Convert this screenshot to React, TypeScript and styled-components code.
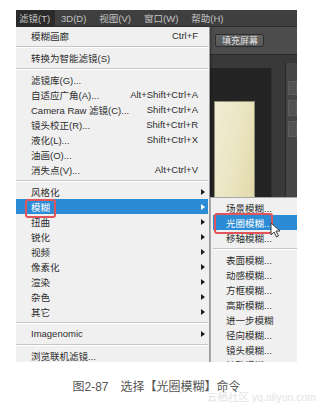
import React from 'react'
import styled, { createGlobalStyle } from 'styled-components'

const UI_FONT = `"Liberation Sans", "Noto Sans CJK SC", sans-serif`
const HILITE = '#2b8bd5'

type Entry =
  | { kind: 'item'; label: string; shortcut?: string; sub?: boolean; active?: boolean; marked?: boolean }
  | { kind: 'sep' }

const item = (label: string, extra: Partial<Omit<Entry & { kind: 'item' }, 'kind' | 'label'>> = {}): Entry => ({
  kind: 'item',
  label,
  ...extra,
})
const sep: Entry = { kind: 'sep' }

const FILTER_MENU: Entry[] = [
  item('模糊画廊', { shortcut: 'Ctrl+F' }),
  sep,
  item('转换为智能滤镜(S)'),
  sep,
  item('滤镜库(G)...'),
  item('自适应广角(A)...', { shortcut: 'Alt+Shift+Ctrl+A' }),
  item('Camera Raw 滤镜(C)...', { shortcut: 'Shift+Ctrl+A' }),
  item('镜头校正(R)...', { shortcut: 'Shift+Ctrl+R' }),
  item('液化(L)...', { shortcut: 'Shift+Ctrl+X' }),
  item('油画(O)...'),
  item('消失点(V)...', { shortcut: 'Alt+Ctrl+V' }),
  sep,
  item('风格化', { sub: true }),
  item('模糊', { sub: true, active: true, marked: true }),
  item('扭曲', { sub: true }),
  item('锐化', { sub: true }),
  item('视频', { sub: true }),
  item('像素化', { sub: true }),
  item('渲染', { sub: true }),
  item('杂色', { sub: true }),
  item('其它', { sub: true }),
  sep,
  item('Imagenomic', { sub: true }),
  sep,
  item('浏览联机滤镜...'),
]

const BLUR_MENU: Entry[] = [
  item('场景模糊...'),
  item('光圈模糊...', { active: true, marked: true }),
  item('移轴模糊...'),
  sep,
  item('表面模糊...'),
  item('动感模糊...'),
  item('方框模糊...'),
  item('高斯模糊...'),
  item('进一步模糊'),
  item('径向模糊...'),
  item('镜头模糊...'),
  item('特殊模糊...'),
]

const MENU_BAR = ['滤镜(T)', '3D(D)', '视图(V)', '窗口(W)', '帮助(H)']

const GlobalStyle = createGlobalStyle`
  html, body {
    margin: 0;
    padding: 0;
    background: #ffffff;
  }
  body {
    font-family: ${UI_FONT};
  }
`

const Page = styled.div`
  position: relative;
  width: 323px;
  height: 411px;
  padding: 10px 0 0 16px;
  box-sizing: border-box;
  overflow: hidden;
`

const Shot = styled.div`
  position: relative;
  width: 281px;
  height: 352px;
  overflow: hidden;
  display: flex;
  flex-direction: column;
  background: #262626;
`

const MenuBar = styled.div`
  height: 17px;
  display: flex;
  align-items: stretch;
  gap: 13px;
  background: #3f3f3f;
  border-bottom: 1px solid #2c2c2c;
  box-sizing: border-box;
`

const MenuBarItem = styled.div<{ $open?: boolean }>`
  display: flex;
  align-items: center;
  padding: ${(p) => (p.$open ? '0 4px 0 3px' : '0')};
  margin-right: ${(p) => (p.$open ? '-7px' : '0')};
  width: ${(p) => (p.$open ? '39px' : 'auto')};
  box-sizing: border-box;
  background: ${(p) => (p.$open ? '#2a2a2a' : 'transparent')};
  color: #c4c4c4;
  font-size: 9.5px;
  white-space: nowrap;
`

const OptionsBar = styled.div`
  height: 28px;
  display: flex;
  align-items: center;
  padding-left: 199px;
  background: #4c4c4c;
  border-bottom: 1px solid #2b2b2b;
  box-sizing: border-box;
`

const FillButton = styled.div`
  width: 49px;
  height: 13px;
  display: flex;
  align-items: center;
  padding-left: 6px;
  box-sizing: border-box;
  background: linear-gradient(#646464, #575757);
  border: 1px solid #2f2f2f;
  border-radius: 2px;
  color: #e2e2e2;
  font-size: 9px;
`

const TabStrip = styled.div`
  height: 13px;
  background: #393939;
`

const Workspace = styled.div`
  flex: 1;
  display: flex;
`

const DocArea = styled.div`
  flex: 1;
  padding: 33px 0 0 198px;
  background: #242424;
`

const DocImage = styled.div`
  width: 41px;
  height: 160px;
  border: 1px solid #8f8b73;
  box-sizing: border-box;
  background: linear-gradient(100deg, #f1edd3 0%, #ebe5c2 45%, #ddd49f 100%);
`

const ScrollColumn = styled.div`
  width: 13px;
  background: #393939;
  border-left: 1px solid #2f2f2f;
`

const SidePanel = styled.div`
  width: 9px;
  margin-top: -5px;
  padding: 18px 0 0 2px;
  display: flex;
  flex-direction: column;
  gap: 5px;
  background: #464646;
  border-left: 1px solid #2a2a2a;
`

const PanelBox = styled.div<{ $h: number }>`
  height: ${(p) => p.$h}px;
  background: #525252;
  border: 1px solid #5e5e5e;
`

const DropMenu = styled.div`
  position: absolute;
  top: 17px;
  left: 0;
  width: 194px;
  padding-top: 1px;
  background: #f0f0f0;
  border-right: 1px solid #9c9c9c;
  box-sizing: border-box;
  box-shadow: 1px 1px 2px rgba(0, 0, 0, 0.35);
  font-size: 9.5px;
`

const SubMenu = styled.div`
  position: absolute;
  top: 187px;
  left: 194px;
  width: 96px;
  padding: 2px 0;
  background: #f0f0f0;
  border-left: 1px solid #a8a8a8;
  border-top: 1px solid #a8a8a8;
  box-sizing: border-box;
  font-size: 9.5px;
`

const Row = styled.div<{ $active?: boolean; $inset?: boolean }>`
  height: 15px;
  display: flex;
  align-items: center;
  margin: ${(p) => (p.$inset ? '0 2px' : '0 1px 0 0')};
  padding-left: ${(p) => (p.$inset ? '13px' : '15px')};
  background: ${(p) => (p.$active ? HILITE : 'transparent')};
  color: ${(p) => (p.$active ? '#ffffff' : '#2e2e2e')};
  white-space: nowrap;
`

const Label = styled.span<{ $marked?: boolean }>`
  position: relative;
  margin-right: auto;
  &::after {
    content: '';
    display: ${(p) => (p.$marked ? 'block' : 'none')};
    position: absolute;
    top: -1px;
    bottom: -4px;
    left: -6px;
    right: -6px;
    border: 2px solid #e2545c;
    border-radius: 3px;
  }
`

const MarkedText = styled.span`
  position: relative;
  display: inline-block;
  &::after {
    content: '';
    position: absolute;
    top: -3px;
    bottom: -4px;
    left: -12px;
    right: -1px;
    border: 2px solid #e2545c;
    border-radius: 3px;
  }
`

const Shortcut = styled.span`
  color: inherit;
`

const ArrowSlot = styled.span`
  width: 10px;
  height: 15px;
  display: flex;
  align-items: center;
  padding-left: 3px;
  box-sizing: border-box;
`

const Arrow = styled.span<{ $light?: boolean }>`
  width: 0;
  height: 0;
  border-top: 3px solid transparent;
  border-bottom: 3px solid transparent;
  border-left: 4px solid ${(p) => (p.$light ? '#ffffff' : '#1c1c1c')};
`

const Separator = styled.div<{ $inset?: boolean }>`
  height: 7px;
  display: flex;
  align-items: center;
  margin: ${(p) => (p.$inset ? '0 2px' : '0 1px 0 0')};
  &::before {
    content: '';
    flex: 1;
    height: 1px;
    background: #c6c6c6;
    box-shadow: 0 1px 0 #ffffff;
  }
`

const Cursor = styled.svg`
  position: absolute;
  left: 254px;
  top: 212px;
`

const Caption = styled.div`
  width: 281px;
  margin-top: 18px;
  text-align: center;
  font-family: "Liberation Sans", "Noto Sans CJK SC", sans-serif;
  font-size: 12px;
  line-height: 14px;
  color: #555555;
  white-space: pre;
`

const Watermark = styled.div`
  position: absolute;
  left: 207px;
  top: 389px;
  font-family: "Liberation Sans", "Noto Sans CJK SC", sans-serif;
  font-size: 10.5px;
  color: #e3e3e3;
  white-space: nowrap;
`

const MenuList: React.FC<{ entries: Entry[]; inset?: boolean }> = ({ entries, inset }) => (
  <>
    {entries.map((e, i) => {
      if (e.kind === 'sep') return <Separator key={i} $inset={inset} />
      if (inset) {
        return (
          <Row key={i} $active={e.active} $inset>
            {e.marked ? <MarkedText>{e.label}</MarkedText> : <span>{e.label}</span>}
          </Row>
        )
      }
      return (
        <Row key={i} $active={e.active}>
          <Label $marked={e.marked}>{e.label}</Label>
          {e.shortcut && <Shortcut>{e.shortcut}</Shortcut>}
          <ArrowSlot>{e.sub && <Arrow $light={e.active} />}</ArrowSlot>
        </Row>
      )
    })}
  </>
)

const App: React.FC = () => {
  return (
    <Page>
      <GlobalStyle />
      <Shot>
        <MenuBar>
          {MENU_BAR.map((m, i) => (
            <MenuBarItem key={m} $open={i === 0}>
              {m}
            </MenuBarItem>
          ))}
        </MenuBar>
        <OptionsBar>
          <FillButton>填充屏幕</FillButton>
        </OptionsBar>
        <TabStrip />
        <Workspace>
          <DocArea>
            <DocImage />
          </DocArea>
          <ScrollColumn />
          <SidePanel>
            <PanelBox $h={12} />
            <PanelBox $h={14} />
            <PanelBox $h={14} />
          </SidePanel>
        </Workspace>

        <DropMenu>
          <MenuList entries={FILTER_MENU} />
        </DropMenu>
        <SubMenu>
          <MenuList entries={BLUR_MENU} inset />
        </SubMenu>
        <Cursor width="11" height="16" viewBox="0 0 11 16">
          <path
            d="M1 1 L1 13 L4 10 L6.5 15 L8.5 14 L6 9 L10 9 Z"
            fill="#ffffff"
            stroke="#3a3a3a"
            strokeWidth="1"
            strokeLinejoin="round"
          />
        </Cursor>
      </Shot>
      <Caption>{'图2-87　选择【光圈模糊】命令'}</Caption>
      <Watermark>云栖社区 yq.aliyun.com</Watermark>
    </Page>
  )
}

export default App
